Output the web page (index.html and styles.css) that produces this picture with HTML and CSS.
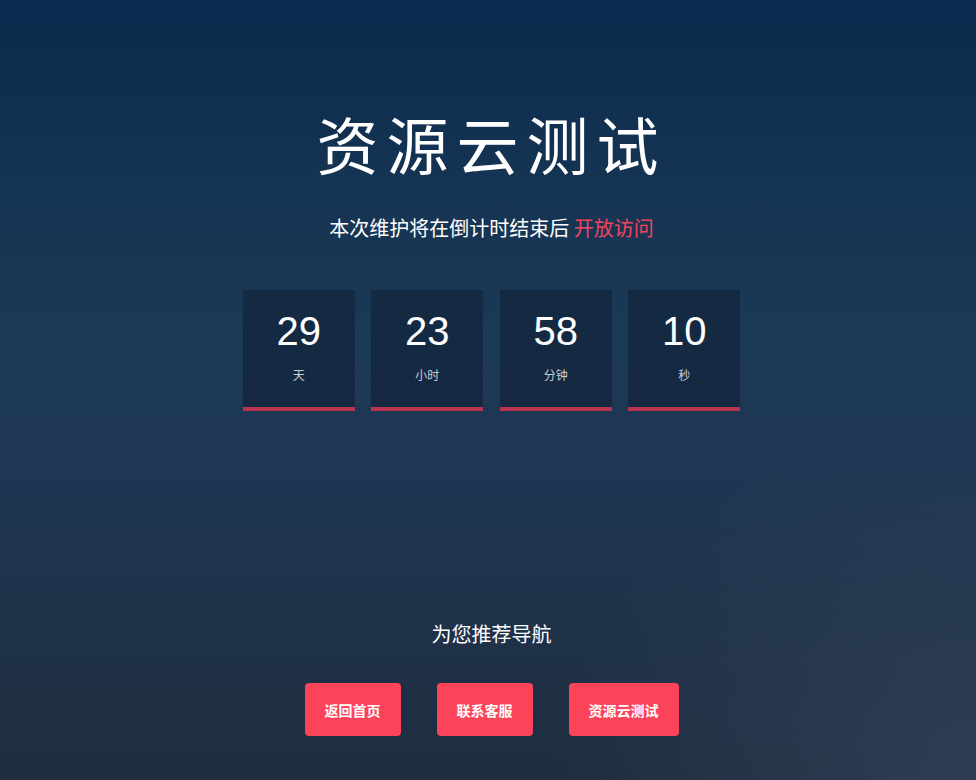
FILE: index.html
```html
<!DOCTYPE html>
<html lang="zh-CN">
<head>
<meta charset="utf-8">
<title>资源云测试</title>
<link rel="stylesheet" href="styles.css">
</head>
<body>
<main class="page">
  <section class="hero">
    <h1 class="title">资源云测试</h1>
    <p class="subtitle">本次维护将在倒计时结束后 <span class="accent">开放访问</span></p>
    <div class="countdown">
      <div class="unit"><div class="num">29</div><div class="label">天</div></div>
      <div class="unit"><div class="num">23</div><div class="label">小时</div></div>
      <div class="unit"><div class="num">58</div><div class="label">分钟</div></div>
      <div class="unit"><div class="num">10</div><div class="label">秒</div></div>
    </div>
  </section>
  <section class="nav">
    <h2 class="nav-title">为您推荐导航</h2>
    <div class="buttons">
      <a class="btn" href="#">返回首页</a>
      <a class="btn" href="#">联系客服</a>
      <a class="btn" href="#">资源云测试</a>
    </div>
  </section>
</main>
</body>
</html>
```
FILE: styles.css
```css
html, body {
  margin: 0;
  padding: 0;
  height: 100%;
}
body {
  font-family: "Noto Sans CJK SC", "Liberation Sans", sans-serif;
  color: #fff;
  background:
    radial-gradient(ellipse 420px 360px at 100% 100%, rgba(52, 68, 92, 0.7), rgba(52, 68, 92, 0) 100%),
    linear-gradient(180deg, #0b2a4d 0%, #163453 25%, #1c3956 45%, #1f3651 65%, #1f2d3f 100%);
  overflow: hidden;
}
.page {
  height: 780px;
  padding-left: 7px;
  display: flex;
  flex-direction: column;
  align-items: center;
}
.hero {
  display: flex;
  flex-direction: column;
  align-items: center;
  padding-top: 101px;
}
.title {
  margin: 0;
  font-size: 62px;
  font-weight: 400;
  line-height: 84px;
  letter-spacing: 8px;
}
.subtitle {
  margin: 28px 0 0;
  font-size: 20px;
  line-height: 30px;
  font-weight: 400;
}
.accent {
  color: #f5435c;
}
.countdown {
  display: flex;
  gap: 16.5px;
  margin-top: 47px;
}
.unit {
  width: 112px;
  height: 117px;
  background: rgba(16, 34, 54, 0.6);
  border-bottom: 4px solid #b8354d;
  display: flex;
  flex-direction: column;
  align-items: center;
}
.num {
  font-family: "Liberation Sans", Arial, sans-serif;
  font-size: 40px;
  line-height: 46px;
  margin-top: 18px;
}
.label {
  font-size: 12px;
  line-height: 16px;
  color: #c8ccd2;
  margin-top: 13px;
}
.nav {
  display: flex;
  flex-direction: column;
  align-items: center;
  margin-top: 209px;
}
.nav-title {
  margin: 0;
  font-size: 20px;
  font-weight: 400;
  line-height: 28px;
}
.buttons {
  display: flex;
  gap: 36px;
  margin-top: 35px;
}
.btn {
  display: flex;
  align-items: center;
  justify-content: center;
  height: 53px;
  padding: 0 20px;
  background: #fb4459;
  color: #fff;
  border-radius: 4px;
  font-size: 14px;
  font-weight: 700;
  text-decoration: none;
}
```
